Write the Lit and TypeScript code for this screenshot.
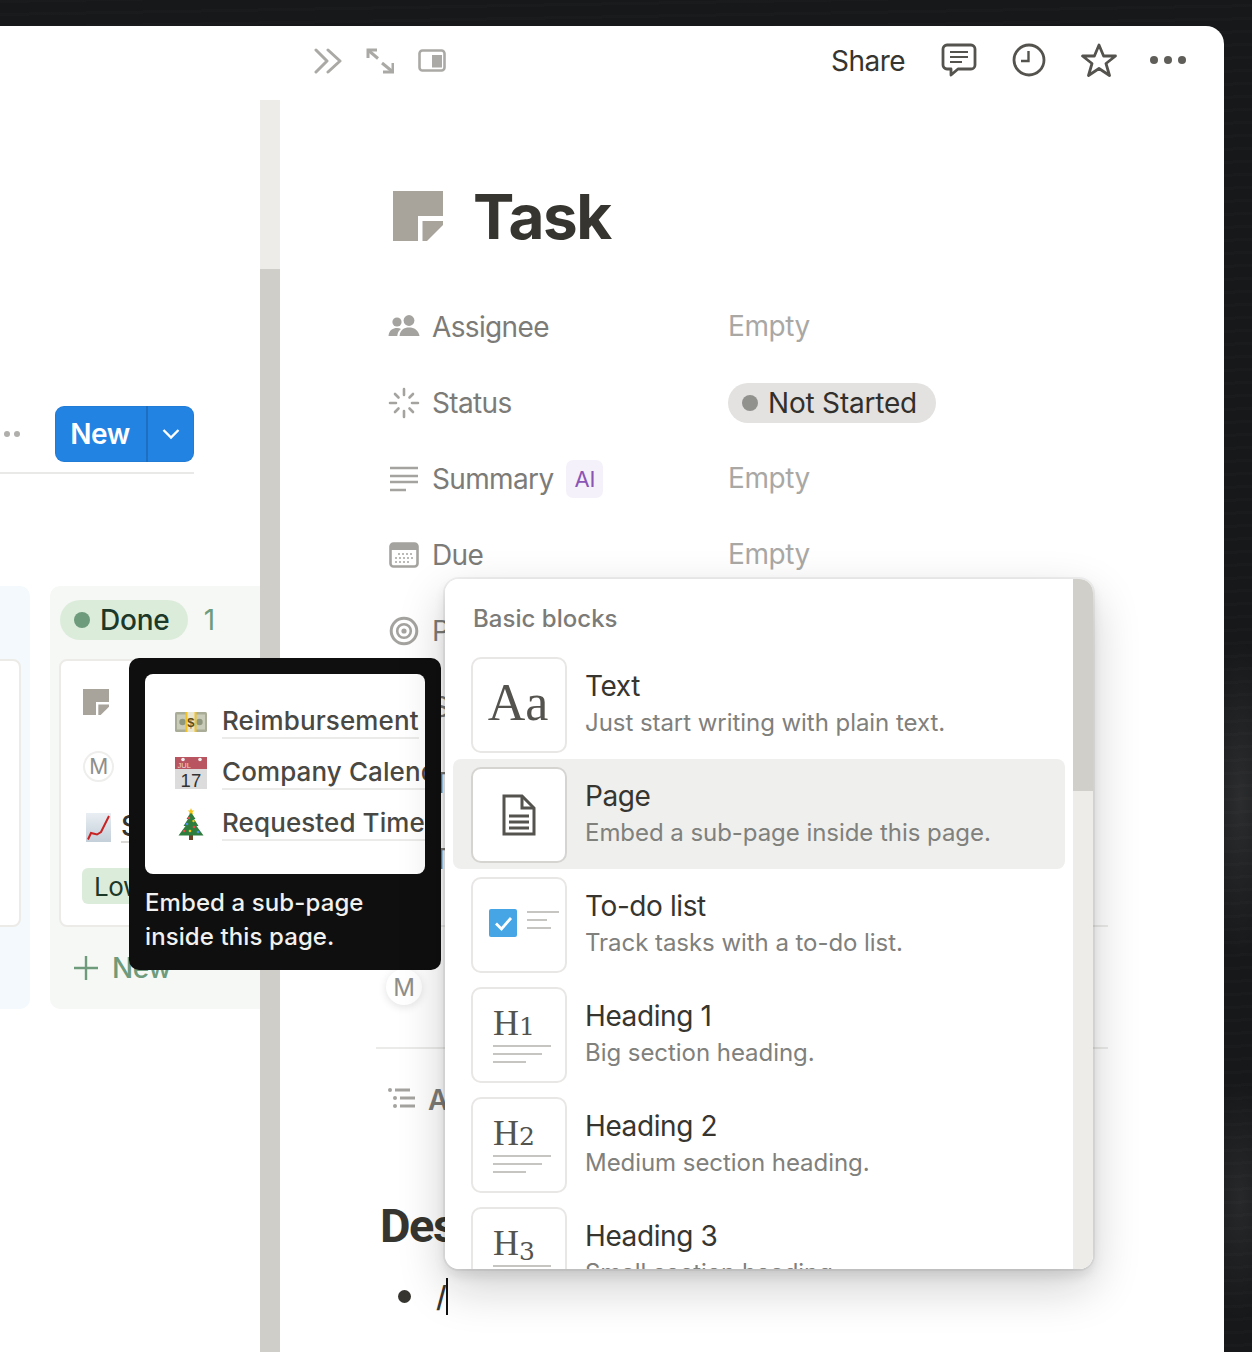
import { LitElement, html, css, svg } from "lit";
import { customElement } from "lit/decorators.js";

const pageIcon = (size: number) => html`<svg width=${size} height=${size} viewBox="0 0 50 50" fill="#a8a49c"><path d="M0 0H50V25H25V50H0Z"/><path d="M29.5 30H50V34L34 50H29.5Z"/></svg>`;

const icons: Record<string, unknown> = {
  people: html`<svg width="32" height="24" viewBox="0 0 32 24" fill="#a5a39f"><circle cx="9" cy="7" r="4.6"/><circle cx="21" cy="5.5" r="5.4"/><path d="M0.5 21C1 15 5 13 9 13c1.6 0 3 .3 4 .9C10.5 15.600 9.500 18 9.300 21Z"/><path d="M11.500 21C12 15 16 12.500 21 12.500S30.500 15 31.500 21Z"/></svg>`,
  status: html`<svg width="32" height="32" viewBox="0 0 32 32" stroke="#a5a39f" stroke-width="2.6" stroke-linecap="round"><path d="M16 2v6M16 24v6M2 16h6M24 16H30"/><path d="M7 7l3.500 3.500M21.500 21.500l3.500 3.500M7 25l3.500-3.500M21.500 10.500l3.500-3.500"/></svg>`,
  summary: html`<svg width="30" height="26" viewBox="0 0 30 26" stroke="#a5a39f" stroke-width="2.500"><path d="M1 2H29M1 10H29M1 16H29M1 24H17"/></svg>`,
  calendar: html`<svg width="30" height="26" viewBox="0 0 30 26"><rect x="1.500" y="1.500" width="27" height="23" rx="3" fill="#fff" stroke="#a5a39f" stroke-width="2.600"/><path d="M1.500 4.500a3 3 0 013-3h21a3 3 0 013 3V8h-27z" fill="#a5a39f"/><g fill="#a5a39f"><circle cx="10" cy="12" r="1"/><circle cx="14" cy="12" r="1"/><circle cx="18" cy="12" r="1"/><circle cx="22" cy="12" r="1"/><circle cx="7" cy="16" r="1"/><circle cx="11" cy="16" r="1"/><circle cx="15" cy="16" r="1"/><circle cx="19" cy="16" r="1"/><circle cx="23" cy="16" r="1"/><circle cx="7" cy="20" r="1"/><circle cx="11" cy="20" r="1"/><circle cx="15" cy="20" r="1"/><circle cx="19" cy="20" r="1"/></g></svg>`,
  target: html`<svg width="30" height="30" viewBox="0 0 30 30" fill="none" stroke="#a5a39f"><circle cx="15" cy="15" r="12.800" stroke-width="3"/><circle cx="15" cy="15" r="6.800" stroke-width="2.600"/><circle cx="15" cy="15" r="2.600" fill="#a5a39f" stroke="none"/></svg>`,
  list: html`<svg class="list-ic" width="30" height="22" viewBox="0 0 30 22" fill="#a5a39f"><circle cx="3" cy="3" r="2"/><circle cx="8" cy="11" r="2"/><circle cx="8" cy="19" r="2"/><rect x="8" y="1.500" width="15" height="3"/><rect x="13" y="9.500" width="15" height="3"/><rect x="13" y="17.500" width="15" height="3"/></svg>`,
  blank: html`<span></span>`,
};

const lines = (y0: number) => svg`<g stroke="#c6c5c2" stroke-width="2"><path d=${`M22 ${y0}H80M22 ${y0 + 8}H71M22 ${y0 + 16}H55`}/></g>`;

const blockIcon = (k: string) => {
  switch (k) {
    case "aa":
      return html`<span class="aa">Aa</span>`;
    case "page":
      return html`<svg width="34" height="42" viewBox="0 0 34 42" fill="none" stroke="#55534e" stroke-width="3"><path d="M2 2H20L32 14V40H2Z"/><path d="M20 2V14H32" /><path d="M7 22H27M7 28H27M7 34H27" stroke-width="2.800"/></svg>`;
    case "todo":
      return html`<svg width="96" height="96" viewBox="0 0 96 96"><rect x="18" y="32" width="28" height="28" rx="2" fill="#46a6e5"/><path d="M25 46.500l5.500 5.500 9.500-11" fill="none" stroke="#fff" stroke-width="2.800"/><path d="M56 35H88M56 43H76M56 51H80" stroke="#c6c5c2" stroke-width="2"/></svg>`;
    default:
      return html`<svg width="96" height="96" viewBox="0 0 96 96"><text x="22" y="48" class="hnum">H<tspan class="hdig" dy=${k === "H3" ? 5 : 0}>${k[1]}</tspan></text>${lines(59)}</svg>`;
  }
};

const blocks = [
  { k: "aa", t: "Text", d: "Just start writing with plain text." },
  { k: "page", t: "Page", d: "Embed a sub-page inside this page.", active: true },
  { k: "todo", t: "To-do list", d: "Track tasks with a to-do list." },
  { k: "H1", t: "Heading 1", d: "Big section heading." },
  { k: "H2", t: "Heading 2", d: "Medium section heading." },
  { k: "H3", t: "Heading 3", d: "Small section heading." },
];

const money = html`<svg width="32" height="20" viewBox="0 0 32 20"><rect width="32" height="20" rx="1.500" fill="#a9ad97"/><rect x="2" y="2.500" width="28" height="15" fill="#c9ccb8"/><circle cx="7.500" cy="10" r="3.200" fill="#8f977f"/><circle cx="24.500" cy="10" r="3.200" fill="#8f977f"/><rect x="10.500" y="0" width="11" height="20" fill="#f2c327"/><rect x="12.500" y="0" width="7" height="20" fill="#e9e6d2"/><text x="16" y="15" text-anchor="middle" font-size="13" font-weight="700" font-family="Liberation Sans" fill="#5f4d18">$</text></svg>`;
const cal = html`<svg width="32" height="32" viewBox="0 0 32 32"><rect y="0" width="32" height="32" fill="#dcdcdc"/><path d="M0 0H32V12H0Z" fill="#b85560"/><circle cx="8" cy="2.500" r="1.800" fill="#eee"/><circle cx="25" cy="2.500" r="1.800" fill="#eee"/><text x="2.500" y="10.500" font-size="7.500" font-family="Liberation Sans" fill="#f0d6d6">JUL</text><text x="16" y="29.500" text-anchor="middle" font-size="18.500" font-family="Liberation Sans" fill="#333">17</text></svg>`;
const tree = html`<svg width="26" height="32" viewBox="0 0 26 32"><rect x="11" y="27" width="4" height="5" fill="#6e4426"/><path d="M13 4L17.500 11H16L20.500 18H18.500L25.500 27.500H0.500L7.500 18H5.500L10 11H8.500Z" fill="#2f7d3c"/><path d="M13 0l1 2.400 2.400.2-1.900 1.500.6 2.300L13 5.100l-2.100 1.300.6-2.300L9.600 2.600 12 2.400z" fill="#f5c518"/><circle cx="11" cy="10" r="1.200" fill="#e34b4b"/><circle cx="15.500" cy="13" r="1.200" fill="#f5c518"/><circle cx="9" cy="16" r="1.300" fill="#4b8fe3"/><circle cx="16" cy="19" r="1.300" fill="#e34b4b"/><circle cx="6" cy="23" r="1.300" fill="#e34b4b"/><circle cx="12" cy="23" r="1.300" fill="#f5c518"/><circle cx="20" cy="24" r="1.300" fill="#4b8fe3"/></svg>`;
const chart = html`<svg width="25" height="29" viewBox="0 0 25 29"><defs><linearGradient id="cg" x1="0" y1="0" x2="0" y2="1"><stop offset="0" stop-color="#e9eef3"/><stop offset="1" stop-color="#c3cfd9"/></linearGradient></defs><rect width="25" height="29" fill="url(#cg)"/><path d="M2 26.500L5 20 11 21.500 15 19 23 3" fill="none" stroke="#c92222" stroke-width="2"/></svg>`;

const props = [
  { i: "people", l: "Assignee", v: "Empty" },
  { i: "status", l: "Status", pill: true },
  { i: "summary", l: "Summary", ai: true, v: "Empty" },
  { i: "calendar", l: "Due", v: "Empty" },
  { i: "target", l: "Priority", v: "" },
  { i: "blank", l: "Scope", v: "" },
  { i: "blank", l: "Type", v: "" },
  { i: "blank", l: "Time", v: "" },
];

@customElement("app-root")
export class AppRoot extends LitElement {
  static styles = css`
    :host {
      display: block;
      position: relative;
      width: 1252px;
      height: 1352px;
      overflow: hidden;
      font-family: Inter, "Liberation Sans", sans-serif;
      letter-spacing: -.4px;
      color: #37352f;
      background-color: #17181a;
      background-image:
        repeating-linear-gradient(179deg, rgba(255,255,255,.012) 0 3px, transparent 3px 13px),
        radial-gradient(ellipse 40px 160px at 1240px 800px, rgba(255,255,255,.09), transparent),
        radial-gradient(ellipse 40px 120px at 1240px 1200px, rgba(255,255,255,.07), transparent);
    }
    .shell { padding: 26px 28px 0 0; height: 1352px; box-sizing: border-box; }
    .window {
      display: flex;
      height: 100%;
      background: #fff;
      border-top-right-radius: 18px;
      overflow: hidden;
    }

    /* left board */
    .left { width: 280px; flex: none; display: flex; overflow: hidden; }
    .board { width: 260px; flex: none; padding-top: 380px; overflow: hidden; box-sizing: border-box; }
    .scroll { width: 20px; flex: none; padding-top: 74px; display: flex; flex-direction: column; box-sizing: border-box; }
    .scroll .track { height: 169px; background: #edece9; }
    .scroll .thumb { flex: 1; background: #cfcec9; }
    .actions { display: flex; justify-content: flex-end; align-items: center; padding-right: 66px; gap: 35px; }
    .more { display: flex; gap: 4px; }
    .more i { width: 6px; height: 6px; border-radius: 50%; background: #b0afab; }
    .new-btn {
      display: flex; height: 56px; width: 139px; border-radius: 9px; background: #2383e2; color: #fff;
      font-size: 28px; font-weight: 600; letter-spacing: -.5px; box-shadow: inset 0 0 0 1px rgba(15,15,15,.06);
    }
    .new-btn .n { width: 93px; padding-right: 1px; box-sizing: border-box; display: flex; align-items: center; justify-content: center; border-right: 2px solid #1f6fc0; }
    .new-btn .c { flex: 1; display: flex; align-items: center; justify-content: center; }
    .rule { height: 2px; width: 194px; background: #e9e9e7; margin-top: 10px; }
    .columns { display: flex; justify-content: flex-end; gap: 20px; margin-top: 112px; }
    .col { flex: none; height: 423px; border-radius: 10px 0 0 10px; box-sizing: border-box; }
    .col.blue { width: 200px; background: #f3f9fc; border-radius: 10px; padding-top: 73px; }
    .col.blue .card { margin-left: -10px; width: 201px; height: 268px; }
    .col.green { width: 210px; background: #f6f8f5; padding: 14px 0 0 10px; }
    .col-head { display: flex; align-items: center; gap: 16px; height: 40px; }
    .done-pill { display: flex; align-items: center; gap: 10px; height: 40px; padding: 0 18px 0 14px; border-radius: 20px; background: #dcecdb; color: #1c3829; font-size: 28px; font-weight: 500; letter-spacing: -.2px; }
    .done-pill i { width: 16px; height: 16px; border-radius: 50%; background: #6d9b7b; }
    .count { color: #6d9b7b; font-size: 28px; }
    .card { background: #fff; border: 2px solid #ecebe8; border-radius: 8px; box-sizing: border-box; }
    .col.green .card { margin: 19px 0 0 -1px; height: 268px; width: 192px; padding: 28px 0 0 22px; white-space: nowrap; }
    .avatar {
      width: 31px; height: 31px; border-radius: 50%; box-sizing: border-box; border: 2px solid #eeeeec; background: #fff;
      display: flex; align-items: center; justify-content: center; color: #8f8e8a; font-size: 21px;
    }
    .card-person { display: flex; align-items: center; gap: 14px; margin-top: 31px; font-size: 26px; height: 32px; }
    .card-link { display: flex; align-items: center; gap: 10px; margin-top: 29px; padding-left: 3px; font-size: 28px; font-weight: 500; }
    .card-link span { border-bottom: 2px solid #d9d8d5; line-height: 30px; }
    .low { display: inline-flex; align-items: center; height: 36px; margin: 25px 0 0 -1px; padding: 0 12px; border-radius: 6px; background: #dcecdb; color: #1c3829; font-size: 26px; }
    .add { display: flex; align-items: center; gap: 13px; margin-top: 24px; padding-left: 13px; color: #6d9b7b; font-size: 28px; font-weight: 500; }

    /* right peek */
    .right { flex: 1; min-width: 0; }
    .bar { height: 70px; display: flex; align-items: center; padding: 0 38px 0 34px; }
    .bar-left { display: flex; align-items: center; gap: 24px; }
    .bar-right { margin-left: auto; display: flex; align-items: center; gap: 36px; }
    .bar-right .share { font-size: 28px; color: #37352f; letter-spacing: -.55px; }
    .bar-right svg { margin-top: -2px; }
    .bar-right svg.clock { margin-left: -1px; }
    .bar-right svg.star { margin-left: -1px; }
    .bar-right svg.dots { margin-left: -3px; }
    .body { padding: 95px 116px 0 96px; }
    .title { display: flex; align-items: center; gap: 30px; height: 50px; padding-left: 17px; }
    h1 { margin: 0; font-size: 62px; line-height: 50px; font-weight: 700; color: #37352f; letter-spacing: -1.400px; position: relative; top: 1px; }
    .props { margin-top: 48px; }
    .prop { height: 76px; display: flex; align-items: center; }
    .prop .ic { width: 56px; flex: none; display: flex; justify-content: center; box-sizing: border-box; }
    .list-ic { margin: -4px 4px 0 0; }
    .prop .name { width: 296px; flex: none; display: flex; align-items: center; gap: 13px; font-size: 28px; color: #7c7b77; letter-spacing: -.65px; }
    .prop .val { font-size: 28px; color: #a9a8a5; margin-top: -2px; }
    .ai { display: flex; align-items: center; justify-content: center; width: 37px; height: 38px; border-radius: 7px; background: #f5f1fa; color: #8a55b5; font-size: 22px; letter-spacing: 0; }
    .status-pill { display: flex; align-items: center; gap: 10px; height: 40px; padding: 0 19px 0 14px; border-radius: 20px; background: #e3e2e0; color: #32302c; font-size: 28px; letter-spacing: -.2px; }
    .status-pill i { width: 16px; height: 16px; border-radius: 50%; background: #91918e; }
    .sep { height: 2px; background: #ebebe9; }
    .sep.first { margin-top: 28px; }
    .comment { height: 120px; display: flex; align-items: center; padding-left: 10px; }
    .comment .avatar { width: 36px; height: 36px; border: none; font-size: 24px; box-shadow: 0 2px 8px rgba(15,15,15,.12); }
    .activity { margin-top: 13px; }
    .activity .name { margin-left: -4px; font-weight: 600; }
    h2 { margin: 58px 0 0 4px; font-family: Roboto, Inter, sans-serif; font-size: 47px; line-height: 60px; font-weight: 700; color: #37352f; letter-spacing: -1.500px; white-space: nowrap; }
    .bullet { display: flex; align-items: center; margin-top: 15px; padding-left: 22px; height: 50px; font-size: 29px; color: #37352f; }
    .bullet i { width: 13px; height: 13px; border-radius: 50%; background: #37352f; margin-right: 25px; }
    .bullet span { border-right: 2px solid #111; line-height: 37px; font-weight: 500; }

    /* tooltip */
    .tip { position: absolute; left: 129px; top: 658px; width: 312px; height: 312px; box-sizing: border-box; padding: 16px; background: #0f0f0f; border-radius: 10px; }
    .tip-pre { height: 200px; background: #fff; border-radius: 8px; padding: 22px 0 0 29px; box-sizing: border-box; overflow: hidden; letter-spacing: .1px; }
    .tip-row { display: flex; align-items: center; height: 51px; gap: 14px; white-space: nowrap; }
    .tip-row .e { width: 34px; flex: none; display: flex; justify-content: center; }
    .tip-row .t { font-size: 26px; font-weight: 500; color: #4a4843; border-bottom: 2px solid #ebebe9; line-height: 32px; }
    .tip-cap { margin: 12px 0 0 0; color: #f1f1f0; font-size: 24px; line-height: 34px; font-weight: 500; letter-spacing: .1px; }

    /* menu */
    .menu {
      position: absolute; left: 445px; top: 579px; width: 648px; height: 690px; display: flex;
      background: #fff; border-radius: 14px; overflow: hidden;
    }
    .menu-shadow {
      position: absolute; left: 445px; top: 579px; width: 648px; height: 690px; border-radius: 14px;
      box-shadow: 0 0 0 2px rgba(15,15,15,.05), 0 6px 12px rgba(15,15,15,.1), 0 18px 48px rgba(15,15,15,.2);
    }
    .menu-main { flex: 1; min-width: 0; overflow: hidden; padding-left: 8px; padding-right: 8px; }
    .menu-bar { width: 20px; flex: none; display: flex; flex-direction: column; }
    .menu-bar .thumb { height: 212px; background: #d0cfca; }
    .menu-bar .track { flex: 1; background: #edece9; }
    .menu-head { height: 70px; display: flex; align-items: center; padding: 8px 0 0 20px; box-sizing: border-box; font-size: 24px; font-weight: 500; color: #7c7b77; letter-spacing: .03px; }
    .blk { height: 110px; display: flex; align-items: center; gap: 18px; padding-left: 18px; border-radius: 8px; box-sizing: border-box; }
    .blk.active { background: #efefee; }
    .box {
      width: 96px; height: 96px; flex: none; box-sizing: border-box; border: 2px solid #e8e7e5; border-radius: 10px; background: #fff; margin-top: 2px;
      display: flex; align-items: center; justify-content: center; position: relative; letter-spacing: 0;
    }
    .box svg[width="96"] { position: absolute; left: -2px; top: -2px; }
    .blk.active .box { border-color: #d5d4d1; }
    .aa { font-family: "Liberation Serif", serif; font-size: 52px; color: #55534e; margin: -6px 0 0 -2px; }
    .hnum { font-family: "Liberation Serif", serif; font-size: 36px; fill: #55534e; }
    .hdig { font-family: "DejaVu Serif", serif; font-size: 25px; }
    .tt { font-size: 28px; line-height: 36px; color: #37352f; }
    .dd { font-size: 24px; line-height: 36px; color: #80807c; margin-top: 1px; letter-spacing: -.05px; }
  `;

  render() {
    return html`
      <div class="shell">
        <div class="window">
          <section class="left">
            <div class="board">
              <div class="actions">
                <div class="more"><i></i><i></i></div>
                <div class="new-btn">
                  <div class="n">New</div>
                  <div class="c"><svg width="18" height="12" viewBox="0 0 18 12" fill="none" stroke="#fff" stroke-width="2.400"><path d="M1.500 2L9 9.500 16.500 2"/></svg></div>
                </div>
              </div>
              <div class="rule"></div>
              <div class="columns">
                <div class="col blue"><div class="card"></div></div>
                <div class="col green">
                  <div class="col-head">
                    <div class="done-pill"><i></i>Done</div>
                    <div class="count">1</div>
                  </div>
                  <div class="card">
                    ${pageIcon(26)}
                    <div class="card-person"><div class="avatar">M</div><span>Mike</span></div>
                    <div class="card-link">${chart}<span>Sales</span></div>
                    <div class="low">Low</div>
                  </div>
                  <div class="add">
                    <svg width="26" height="26" viewBox="0 0 26 26" stroke="#6d9b7b" stroke-width="2.400"><path d="M13 1V25M1 13H25"/></svg>
                    New
                  </div>
                </div>
              </div>
            </div>
            <div class="scroll"><div class="track"></div><div class="thumb"></div></div>
          </section>

          <section class="right">
            <div class="bar">
              <div class="bar-left">
                <svg width="28" height="26" viewBox="0 0 28 26" fill="none" stroke="#aaa9a5" stroke-width="3" stroke-linecap="round" stroke-linejoin="round"><path d="M2 2L13 13 2 24M14 2L26 13 14 24"/></svg>
                <svg width="28" height="26" viewBox="0 0 28 26" fill="none" stroke="#aaa9a5" stroke-width="3"><path d="M2 10V2H11"/><path d="M2 2L12 10.500"/><path d="M27 15V24H17"/><path d="M16 15L27 24"/></svg>
                <svg width="28" height="24" viewBox="0 0 28 24"><rect x="1.500" y="1.500" width="25" height="20" rx="3" fill="none" stroke="#aaa9a5" stroke-width="2.600"/><rect x="14" y="6" width="10" height="12.500" fill="#aaa9a5"/></svg>
              </div>
              <div class="bar-right">
                <span class="share">Share</span>
                <svg width="36" height="34" viewBox="0 0 36 34" fill="none" stroke="#55534e" stroke-width="2.800" stroke-linejoin="round"><path d="M6 2H30a4 4 0 014 4V22a4 4 0 01-4 4H17l-7 6V26H6a4 4 0 01-4-4V6a4 4 0 014-4Z"/><path d="M9 9H27M9 14H27M9 19H21" stroke-width="2"/></svg>
                <svg class="clock" width="34" height="34" viewBox="0 0 34 34" fill="none" stroke="#55534e" stroke-width="2.800"><circle cx="17" cy="17" r="15"/><path d="M16.500 8V18H9" stroke-width="2.400"/></svg>
                <svg class="star" width="36" height="34" viewBox="0 0 36 34" fill="none" stroke="#55534e" stroke-width="2.800" stroke-linejoin="round"><path d="M18 2L22.600 13H34.500L25 20.500 28.500 32.500 18 25.500 7.500 32.500 11 20.500 1.500 13H13.400Z"/></svg>
                <svg class="dots" width="36" height="10" viewBox="0 0 36 10" fill="#5f5e59"><circle cx="4" cy="5" r="4"/><circle cx="18" cy="5" r="4"/><circle cx="32" cy="5" r="4"/></svg>
              </div>
            </div>
            <div class="body">
              <div class="title">${pageIcon(50)}<h1>Task</h1></div>
              <div class="props">
                ${props.map(
                  (p) => html`<div class="prop">
                    <div class="ic">${icons[p.i]}</div>
                    <div class="name">${p.l}${p.ai ? html`<span class="ai">AI</span>` : ""}</div>
                    ${p.pill
                      ? html`<div class="status-pill"><i></i>Not Started</div>`
                      : html`<div class="val">${p.v}</div>`}
                  </div>`
                )}
              </div>
              <div class="sep first"></div>
              <div class="comment"><div class="avatar">M</div></div>
              <div class="sep"></div>
              <div class="prop activity"><div class="ic">${icons.list}</div><div class="name">Activity</div></div>
              <h2>Description</h2>
              <div class="bullet"><i></i><span>/</span></div>
            </div>
          </section>
        </div>
      </div>

      <div class="tip">
        <div class="tip-pre">
          <div class="tip-row"><div class="e">${money}</div><div class="t">Reimbursement</div></div>
          <div class="tip-row"><div class="e">${cal}</div><div class="t">Company Calendar</div></div>
          <div class="tip-row"><div class="e">${tree}</div><div class="t">Requested Time Off</div></div>
        </div>
        <div class="tip-cap">Embed a sub-page<br />inside this page.</div>
      </div>

      <div class="menu-shadow"></div>
      <div class="menu">
        <div class="menu-main">
          <div class="menu-head">Basic blocks</div>
          ${blocks.map(
            (b) => html`<div class="blk ${b.active ? "active" : ""}">
              <div class="box">${blockIcon(b.k)}</div>
              <div><div class="tt">${b.t}</div><div class="dd">${b.d}</div></div>
            </div>`
          )}
        </div>
        <div class="menu-bar"><div class="thumb"></div><div class="track"></div></div>
      </div>
    `;
  }
}
